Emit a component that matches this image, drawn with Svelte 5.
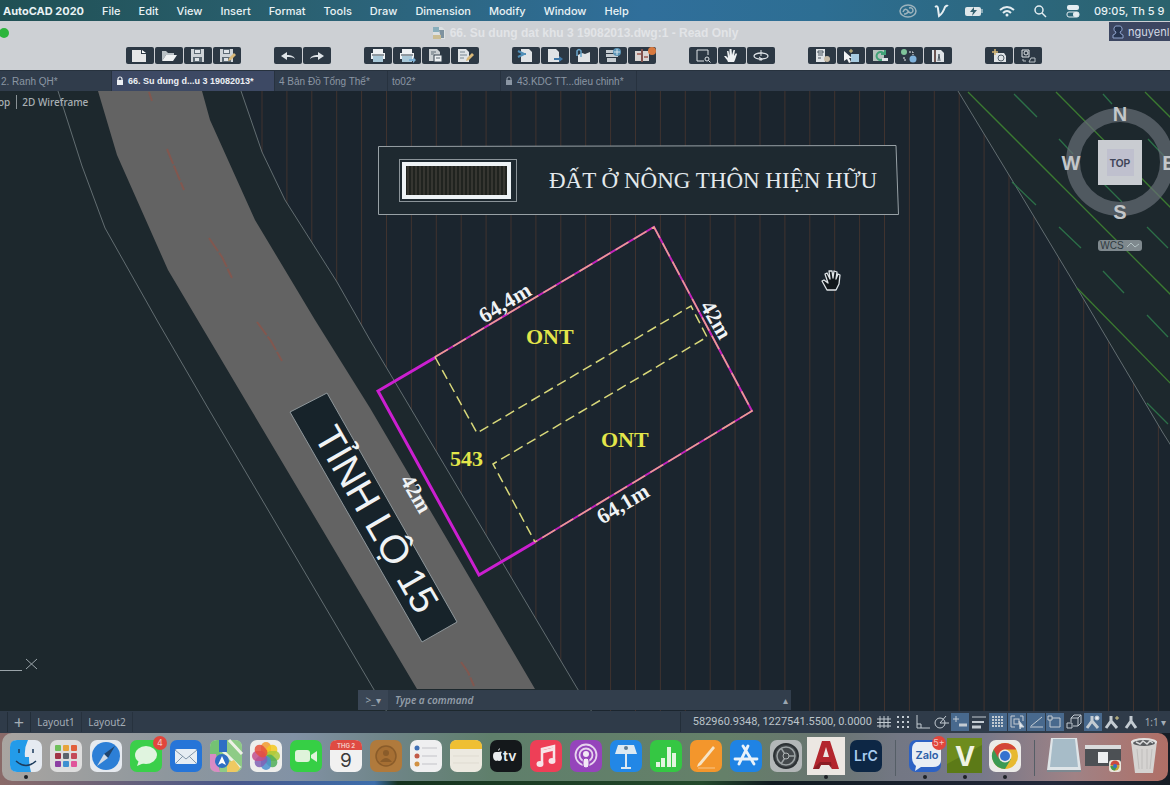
<script>
  const menus = ["File", "Edit", "View", "Insert", "Format", "Tools", "Draw", "Dimension", "Modify", "Window", "Help"];

  const printer = '<path d="M9 2h10v4H9zM7 6h14v6H7z" fill="#eef1f3"/><path d="M9 9h10v6H9z" fill="#a9c8d8"/><path d="M8 8h12" stroke="#33404c"/>';
  const floppy = '<path d="M7 2h13v13H7z" fill="#cfd4d8"/><path d="M10 2h7v5h-7zM9 10h9v5H9z" fill="#5d6a74"/><path d="M11 3h5v3h-5zM11 11h4v3h-4z" fill="#dfe4e8"/>';
  const pencil = '<path d="M15 14l1-3 5-5 2 2-5 5z" fill="#d9b878"/>';

  const toolGroups = [
    [
      { name: "New", icon: '<path d="M6 3h9v4h5v8H6z" fill="#e6e7e8"/><path d="M16 3l4 3h-4z" fill="#fff"/>' },
      { name: "Open", icon: '<path d="M7 14V4h4l2 2h6v2h-8z" fill="#b9c1c6"/><path d="M7 14l4-6h11l-4 6z" fill="#eef1f3"/>' },
      { name: "Save", icon: floppy },
      { name: "Save As", icon: floppy + pencil }
    ],
    [
      { name: "Undo", icon: '<path d="M7 9l6-4v3c4 0 7 1 8 4-2-2-5-2-8-2v3z" fill="#dfe4e8"/>' },
      { name: "Redo", icon: '<path d="M21 9l-6-4v3c-4 0-7 1-8 4 2-2 5-2 8-2v3z" fill="#dfe4e8"/>' }
    ],
    [
      { name: "Print", icon: printer },
      { name: "Batch Print", icon: printer + '<path d="M16 12h4v-2l3 3-3 3v-2h-4z" fill="#7fb2d6"/>' },
      { name: "Page Setup", icon: '<path d="M7 2h8l3 3v9H7z" fill="#cbd0d3"/><path d="M12 8h8v7h-8z" fill="#eef1f3" stroke="#33404c"/><path d="M9 5h5M9 7h3M14 11h4" stroke="#5d6a74"/>' },
      { name: "Edit Page", icon: '<path d="M7 2h8l3 3v10H7z" fill="#dfe3e6"/><path d="M9 5h5M9 8h7M9 11h4" stroke="#7b8892"/>' + pencil }
    ],
    [
      { name: "Import", icon: '<path d="M9 2h8l3 3v10H9z" fill="#dfe3e6"/><path d="M6 4l6 3M6 10l6-3M9 7h5" stroke="#4f8fb8" stroke-width="2" fill="none"/>' },
      { name: "Export", icon: '<path d="M7 2h8l3 3v10H7z" fill="#dfe3e6"/><path d="M13 11h5V9l4 3-4 3v-2h-5z" fill="#3f78a8"/>' },
      { name: "Attach", icon: '<path d="M8 8l4-2 3 1 5-2v10H8z" fill="#dfe3e6"/><path d="M7 9V4q2-3 4 0v6" stroke="#6aa6cb" fill="none" stroke-width="1.5"/>' },
      { name: "Reference", icon: '<path d="M7 3h9v3H7zM7 7h12v3H7zM8 11h9v4H8z" fill="#c5ccd1"/><circle cx="18" cy="5" r="4" fill="#5d96b8"/><path d="M15 5h6M18 2v6" stroke="#d5e3eb"/>' },
      { name: "Compare", alert: true, icon: '<path d="M7 4h6v10H7zM15 4h6v10h-6z" fill="#d9d5d3"/><path d="M14 2v13M9 7h4M16 10h4" stroke="#9d5b50" stroke-width="1.5"/>' }
    ],
    [
      { name: "Zoom Window", icon: '<path d="M19 8V3H8v11h7" fill="none" stroke="#dfe4e8"/><circle cx="18" cy="12" r="2" fill="none" stroke="#dfe4e8"/><path d="M19.500 13.500l2 2" stroke="#dfe4e8"/>' },
      { name: "Pan", icon: '<path d="M10 15c-1-3-3-4-4-6l2 0 2 2-1-7h1.500l1 5V2h2l.5 6 1.500-5h1.500l-1 6 2-3 1 1-2 6-1 2z" fill="#eef1f3"/>' },
      { name: "Orbit", icon: '<ellipse cx="14" cy="9" rx="7" ry="3" fill="none" stroke="#dfe4e8" stroke-width="1.300"/><path d="M14 3v6M14 11v3M12 13l3-1-3-2" stroke="#dfe4e8" fill="none"/>' }
    ],
    [
      { name: "Properties", icon: '<path d="M8 2h9v13H8z" fill="#dfe3e6"/><path d="M10 4h5v2h-5zM10 8h5M10 11h3" stroke="#4c5963" fill="none"/><circle cx="19" cy="12" r="3" fill="#c8bca7"/>' },
      { name: "Quick Select", icon: '<path d="M14 7h8v8h-8z" fill="#a7cbe0"/><path d="M7 4v10l3-2 2 4 2-1-2-4h3z" fill="#f2f4f5"/><path d="M12 4h4M14 2v4" stroke="#d9c884"/>' },
      { name: "Update", icon: '<path d="M7 3h11v11H7z" fill="#b5c2bd"/><path d="M18 7a4 4 0 1 0 0 4M19 3v4h-4" fill="none" stroke="#3fa277" stroke-width="2"/><path d="M16 11h6v3h-6z" fill="#dfe4e8"/>' },
      { name: "Match", icon: '<circle cx="9" cy="5" r="3" fill="#7fc39a"/><circle cx="18" cy="12" r="3.500" fill="#7fb2dc"/><path d="M14 5h4v3M9 10v3h3" stroke="#e8ebed" stroke-dasharray="2 1" fill="none"/>' },
      { name: "Library", icon: '<path d="M8 3h9l3 3v9H8z" fill="#dfe3e6"/><path d="M11 3v12" stroke="#6c5552" stroke-width="2"/><path d="M14 14l1-7 1 7" stroke="#4c5963" fill="none"/>' }
    ],
    [
      { name: "Insert Block", icon: '<path d="M9 6h10l2 3v6H9z" fill="#dfe3e6"/><circle cx="16" cy="11" r="3" fill="none" stroke="#53606a"/><path d="M7 5h6M10 2v6" stroke="#d5b774" stroke-width="1.500"/>' },
      { name: "Edit Block", icon: '<path d="M8 3h7v7H8z" fill="none" stroke="#dfe3e6"/><circle cx="12" cy="6" r="2" fill="none" stroke="#dfe3e6"/><path d="M9 12v2h3M15 15l2-4h4v4z" stroke="#b9c1c6" fill="none"/>' }
    ]
  ];

  const tabs = [
    { title: "2. Ranh QH*", size: "first" },
    { title: "66. Su dung d...u 3 19082013*", locked: true, active: true, size: "wide" },
    { title: "4 Bản Đồ Tổng Thể*" },
    { title: "to02*" },
    { title: "43.KDC TT...dieu chinh*", locked: true, size: "mid" }
  ];

  // hatch of the residential zone
  const hatch = Array.from({ length: 37 }, (_, i) => 262 + i * 24.9);
  const swatchHatch = Array.from({ length: 25 }, (_, i) => 408 + i * 4);

  const medians = ["M149 92L152 101", "M167 149L174 166L184 190", "M209 238L222 257L232 278", "M257 322L271 341L282 361", "M461 662L468 672L474 686"];
  const greenLines = ["M968 92L1175 299", "M1056 92L1175 212", "M1145 92L1175 122", "M1077 288L1175 388"];
  const greenDashes = ["M1014 94L1037 117", "M1103 94L1112 104", "M1059 139L1073 154", "M1148 139L1164 156", "M1104 184L1122 202", "M1012 182L1036 205", "M1059 227L1081 248", "M1147 227L1168 248", "M1103 271L1124 293", "M1147 315L1168 337", "M1147 403L1168 424"];

  const status = [
    { name: "Grid", icon: '<path d="M5 3v12M9 3v12M13 3v12M2 6h14M2 9.500h14M2 13h14"/>' },
    { name: "Snap", icon: '<path d="M3 4h12M3 9h12M3 14h12" stroke-dasharray="2 3" stroke-width="2"/>' },
    { name: "Ortho", icon: '<path d="M4 2v13h13M4 11h4v4"/>' },
    { name: "Polar", icon: '<circle cx="8" cy="10" r="5"/><path d="M8 10l6-7M8 10h9"/>' },
    { name: "Dynamic input", on: true, icon: '<path d="M5 3v6M2 6h6"/><path d="M8 12h8" stroke-width="3"/>' },
    { name: "Lineweight", icon: '<path d="M2 4h14" /><path d="M2 9h12" stroke-width="2"/><path d="M2 14h9" stroke-width="3"/>' },
    { name: "Transparency", on: true, icon: '<path d="M3 4h12M3 7h12M3 10h12M3 13h12" stroke-dasharray="2 1" stroke-width="2"/>' },
    { name: "Selection cycling", on: true, icon: '<path d="M7 3H3v11h4M12 3h3v5"/><rect x="6" y="6" width="5" height="5"/><path d="M11 8l5 6-3 0-1 2z" fill="#e5ebf1"/>' },
    { name: "Tracking", on: true, icon: '<path d="M3 14h13M4 13l11-9"/>' },
    { name: "Object snap", on: true, icon: '<path d="M4 5h10v9H4z"/><path d="M2 3h4v4H2z" fill="#48637f"/>' },
    { name: "3D snap", icon: '<path d="M6 5l3-3h7v8l-3 3M6 5h7v8H8M13 5l3-3M6 5v4"/><path d="M2 10h5v5H2z"/>' },
    { name: "Annotation visibility", on: true, icon: '<path d="M8 3v6M8 8L3 15M8 8l6 7" stroke-width="3"/><circle cx="13" cy="5" r="2" fill="#e5ebf1"/>' },
    { name: "Auto scale", icon: '<path d="M8 3v6M8 8L3 15M8 8l6 7" stroke-width="3"/><path d="M12 5h4M14 3v4" stroke="#d8cc8c"/>' },
    { name: "Annotation scale", icon: '<path d="M9 3v6M9 8l-5 7M9 8l5 7" stroke-width="3"/>' }
  ];

  const tile = (fill) => `<rect width="32" height="32" rx="7" fill="${fill}"/>`;
  const petals = ["#f29a2e", "#f3c81f", "#a8c93b", "#4fae5a", "#4a8fcf", "#8062b5", "#c24f8d", "#e5503d"]
    .map((c, i) => `<rect x="11" y="2" width="10" height="14" rx="5" fill="${c}" opacity=".85" transform="rotate(${i * 45} 16 16)"/>`)
    .join("");
  const pads = ["#6fbf5b", "#e7a33a", "#e2603b", "#a03344", "#5c646d", "#c44a58", "#8c3fa3", "#3f8fd0", "#e0559b"]
    .map((c, i) => `<rect x="${5 + (i % 3) * 8}" y="${5 + Math.floor(i / 3) * 8}" width="6" height="6" rx="1" fill="${c}"/>`)
    .join("");

  const dock = [
    { name: "Finder", running: true, icon: tile("#e5eaf1") + '<path d="M7 0h11q-4 8-3 17h4q0 8 2 15H7q-7 0-7-7V7q0-7 7-7z" fill="#239be9"/><path d="M9 9v4M23 9v4M6 21q10 9 20 0" stroke="#1c3b5c" stroke-width="1.500" fill="none"/>' },
    { name: "Launchpad", icon: tile("#dedede") + pads },
    { name: "Safari", icon: tile("#e6eaef") + '<circle cx="16" cy="16" r="14" fill="#2d7fd6"/><path d="M25 6L18 18 14 14z" fill="#22466f"/><path d="M7 26l7-12 4 4z" fill="#d3dbe5"/>' },
    { name: "Messages", badge: "4", icon: tile("#3bcf4a") + '<ellipse cx="16" cy="15" rx="11" ry="9" fill="#e0f4df"/><path d="M9 20l-2 6 7-3z" fill="#e0f4df"/>' },
    { name: "Mail", icon: tile("#2675d8") + '<rect x="5" y="9" width="22" height="15" rx="2" fill="#e6edf3"/><path d="M5 10l11 9 11-9M6 23l7-7M26 23l-7-7" fill="none" stroke="#8397aa"/>' },
    { name: "Maps", icon: tile("#dfe6dc") + '<path d="M0 8V7q0-7 7-7h3v32H7q-7 0-7-7z" fill="#74c273"/><path d="M10 0h15q7 0 7 7v18q0 7-7 7H10z" fill="#8ecb86"/><path d="M19 0l13 14M10 8l20 20" stroke="#eef1e6" stroke-width="3"/><path d="M9 0h8v12H9z" fill="#2e6fc4"/><path d="M0 14v11q0 7 7 7h3l-4-18z" fill="#d98bc4"/><path d="M17 23l7-3 6 8q-2 4-5 4h-8z" fill="#efc961"/><circle cx="12" cy="21" r="7" fill="#2d6fc4"/><path d="M12 16l4 9-4-2-4 2z" fill="#fff"/>' },
    { name: "Photos", icon: tile("#eeeeec") + petals },
    { name: "FaceTime", icon: tile("#36cf45") + '<rect x="5" y="10" width="15" height="12" rx="3" fill="#dff3da"/><path d="M21 15l6-4v11l-6-4z" fill="#dff3da"/>' },
    { name: "Calendar", icon: tile("#f1f1f1") + '<path d="M0 10V7q0-7 7-7h18q7 0 7 7v3z" fill="#df4a42"/><text x="16" y="8" font-size="6" font-weight="700" fill="#f3c6c0" text-anchor="middle">THG 2</text><text x="16" y="27" font-size="19" fill="#3a3a3a" text-anchor="middle">9</text>' },
    { name: "Contacts", icon: tile("#b07a3c") + '<circle cx="16" cy="16" r="10" fill="#a66f33" stroke="#8a5c2a" stroke-width="1.500"/><circle cx="16" cy="13" r="3" fill="#8a5c2a"/><path d="M10 22q6-8 12 0z" fill="#8a5c2a"/>' },
    { name: "Reminders", icon: tile("#efeff0") + '<circle cx="7" cy="8" r="2.500" fill="#3f6fb4"/><circle cx="7" cy="16" r="2.500" fill="#c25a48"/><circle cx="7" cy="24" r="2.500" fill="#d19143"/><path d="M12 8h15M12 16h15M12 24h15" stroke="#c3c3c8"/>' },
    { name: "Notes", icon: tile("#ece9e0") + '<path d="M0 9V7q0-7 7-7h18q7 0 7 7v2z" fill="#efbf33"/><path d="M3 16h26M3 23h26" stroke="#dfdbd1"/>' },
    { name: "TV", icon: tile("#14181b") + '<path d="M9 12q2-1 3 0-2 2 0 5 0 4-3 4-2-1-3 0-3-1-3-5 0-4 3-4 1 0 3 0zM8 11q0-2 2-3 0 2-2 3z" fill="#e9ecee"/><text x="13" y="21" font-size="14" font-weight="600" fill="#e9ecee">tv</text>' },
    { name: "Music", icon: tile("#ee3f57") + '<path d="M12 23V9l12-3v14" fill="none" stroke="#f7e5e8" stroke-width="2.500"/><path d="M12 12l12-3" stroke="#f7e5e8" stroke-width="3"/><ellipse cx="10" cy="24" rx="3.500" ry="3" fill="#f7e5e8"/><ellipse cx="22" cy="21" rx="3.500" ry="3" fill="#f7e5e8"/>' },
    { name: "Podcasts", icon: tile("#9544bb") + '<circle cx="16" cy="15" r="10.500" fill="none" stroke="#e7d4ee" stroke-width="1.800"/><circle cx="16" cy="15" r="6.500" fill="none" stroke="#e7d4ee" stroke-width="1.800"/><circle cx="16" cy="14" r="3" fill="#f3e9f6"/><rect x="13" y="18" width="6" height="10" rx="3" fill="#f3e9f6" stroke="#9544bb"/>' },
    { name: "Keynote", icon: tile("#2287e6") + '<path d="M8 5h16l3 9H5z" fill="#dce9f2"/><circle cx="16" cy="8" r="2" fill="#5e7c93"/><path d="M16 14v13M11 28h10" stroke="#dce9f2" stroke-width="2"/>' },
    { name: "Numbers", icon: tile("#35c743") + '<path d="M6 27v-5h4v5zM11 27v-9h4v9zM17 27V7h4v20zM22 27V13h4v14z" fill="#e3f5df"/>' },
    { name: "Pages", icon: tile("#f3962c") + '<path d="M8 24L23 6l2 2L11 25l-4 2z" fill="#f6e4c6"/><path d="M8 28h17" stroke="#f7c68a"/>' },
    { name: "App Store", icon: tile("#1f83e4") + '<path d="M18 6L9 24M13 6l11 18M5 19h22" stroke="#e9f2fa" stroke-width="2.800" stroke-linecap="round"/>' },
    { name: "System Settings", icon: tile("#b3b7b8") + '<circle cx="16" cy="16" r="12" fill="#43484b" stroke="#2d3235" stroke-width="2"/><circle cx="16" cy="16" r="9" fill="none" stroke="#9ca2a4" stroke-width="1.500"/><circle cx="16" cy="16" r="3" fill="none" stroke="#b3b7b8"/><path d="M19 16h6M14.500 13.500L11 8M14.500 18.500L11 24" stroke="#9ca2a4" stroke-width="1.500"/>' },
    { name: "AutoCAD", running: true, icon: '<rect x="-3" y="-3" width="38" height="38" fill="#ece7e2"/><path d="M3 29L12 1h8l9 28h-7l-2-7h-8l-3 7z" fill="#b3262d"/><path d="M13 17h6l-3-10z" fill="#ece7e2"/><path d="M3 29l7-7h11l1 7-3-4-8 0-2 4z" fill="#8c1d24"/>' },
    { name: "Lightroom Classic", icon: tile("#0d2745") + '<text x="16" y="21" font-size="14" font-weight="600" fill="#a9cdf0" text-anchor="middle">LrC</text>' },
    { split: true },
    { name: "Zalo", badge: "5+", running: true, icon: tile("#2d62c4") + '<path d="M7 2h20q5 0 5 6v12q0 7-8 7H12l-6 4 1-5q-4-3-4-8V9q0-5 4-7z" fill="#e9eef4"/><text x="18" y="19" font-size="11" font-weight="600" fill="#2d5fa8" text-anchor="middle">Zalo</text>' },
    { name: "V", running: true, icon: '<rect x="-2" y="-2" width="35" height="35" fill="#6e8c1d"/><path d="M-2 24L33 5v28H-2z" fill="#5c7a17"/><text x="16" y="26" font-size="27" font-weight="700" fill="#f0f3e2" text-anchor="middle">V</text>' },
    { name: "Chrome", running: true, icon: tile("#ecebe8") + '<circle cx="16" cy="16" r="13" fill="#e7b92f"/><path d="M16 16L4.700 9.500A13 13 0 0 0 16 29l6-10z" fill="#3b9a53"/><path d="M4.700 9.500A13 13 0 0 1 27.300 9.500H16a7 7 0 0 0-6 10z" fill="#d34538"/><circle cx="16" cy="16" r="6.500" fill="#ecebe8"/><circle cx="16" cy="16" r="5" fill="#3473cf"/>' },
    { split: true },
    { name: "Disk", icon: '<path d="M3-2h26l4 32H-1z" fill="#dfe5e8"/><path d="M5-1h22l3 28H2z" fill="#a7bcc8"/><path d="M-1 30h34v2H-1z" fill="#7d8991"/>' },
    { name: "Minimized window", icon: '<path d="M-3 5h36v21H-3z" fill="#4c5054"/><path d="M-3 5h36v4H-3z" fill="#dadbdc"/><path d="M10 12h10v11H10z" fill="#eef0f1"/><rect x="21" y="20" width="12" height="12" rx="3" fill="#e9e6dc"/><circle cx="27" cy="26" r="4.500" fill="#c9a43a"/><path d="M22.500 26a4.500 4.500 0 0 0 4.500 4.500l2-4z" fill="#3b9a53"/><path d="M22.500 25a4.500 4.500 0 0 1 9 0z" fill="#cc4a3d"/><circle cx="27" cy="26" r="2" fill="#3b70c4"/>' },
    { name: "Trash", icon: '<path d="M3 1h26l-4 32H7z" fill="#d5d3d1"/><ellipse cx="16" cy="2" rx="13" ry="4" fill="#e3e2e1"/><ellipse cx="16" cy="3" rx="11" ry="3" fill="#585b5e"/><path d="M8 2l4 2 3-3 4 3 3-3 3 2" stroke="#d9dadb" fill="none" stroke-width="1.500"/><path d="M9 9l2 20M14 9v20M19 9v20M24 9l-2 20" stroke="#bfbdbb"/>' }
  ];
</script>

{#snippet lock()}
  <svg class="lock" viewBox="0 0 8 10" aria-hidden="true">
    <path d="M2 5V3a2 2 0 0 1 4 0v2" fill="none" stroke="currentColor" stroke-width="1.2" />
    <rect x="1" y="4" width="6" height="5" fill="currentColor" />
  </svg>
{/snippet}

<div class="screen">
  <header class="menubar">
    <nav>
      <strong>AutoCAD 2020</strong>
      {#each menus as menu}
        <button>{menu}</button>
      {/each}
    </nav>
    <div class="tray">
      <svg viewBox="0 0 18 14"><ellipse cx="9" cy="7" rx="8" ry="6" fill="none" stroke="#9db3bd" stroke-width="1.5" /><path d="M4 8q2-5 5-1t5 0q0-4-4-3M5 10q3 0 5-3" fill="none" stroke="#9db3bd" stroke-width="1.5" /></svg>
      <svg viewBox="0 0 18 14"><path d="M3 3q3-2 3 2l1 7q4-3 6-9 2-2 3-1" fill="none" stroke="#e4edf1" stroke-width="2" /></svg>
      <svg viewBox="0 0 18 14"><rect x="0" y="3" width="16" height="9" rx="2" fill="#dfe7ea" /><path d="M17 5v4" stroke="#dfe7ea" /><path d="M9 3L5 8h3l-1 4 5-6H9z" fill="#33606f" /></svg>
      <svg viewBox="0 0 18 14"><path d="M2 6q7-6 14 0M5 9q4-4 8 0" fill="none" stroke="#e4edf1" stroke-width="2" /><circle cx="9" cy="11" r="1.500" fill="#e4edf1" /></svg>
      <svg viewBox="0 0 18 14"><circle cx="8" cy="6" r="4" fill="none" stroke="#e4edf1" stroke-width="1.500" /><path d="M11 9l4 4" stroke="#e4edf1" stroke-width="1.500" /></svg>
      <svg viewBox="0 0 18 14"><rect x="3" y="1" width="12" height="5" rx="2" fill="#e4edf1" /><rect x="3" y="8" width="12" height="5" rx="2" fill="none" stroke="#e4edf1" /><rect x="9" y="8" width="6" height="5" rx="2" fill="#e4edf1" /></svg>
      <time>09:05, Th 5 9</time>
    </div>
  </header>

  <div class="titlebar">
    <i class="light"></i>
    <div class="title">
      <svg viewBox="0 0 14 14" aria-hidden="true"><path d="M1 1h9l3 3v9H1z" fill="#dce0e2" /><path d="M1 1h6v5H1z" fill="#88aebc" /><path d="M7 4h5v8H9z" fill="#7e929f" /><path d="M1 9h8v4H1z" fill="#cbbd94" /></svg>
      <span>66. Su dung dat khu 3 19082013.dwg:1 - Read Only</span>
    </div>
    <button class="user">
      <svg viewBox="0 0 12 14" aria-hidden="true"><path d="M6 1a3 3 0 0 1 2 6q0 2 3 3v3H1v-3q3-1 3-3a3 3 0 0 1 2-6z" fill="#26344f" stroke="#8fa3cc" /></svg>
      nguyenl
    </button>
  </div>

  <div class="toolbar">
    {#each toolGroups as group}
      <div class="tools">
        {#each group as tool}
          <button aria-label={tool.name}>
            <svg viewBox="0 0 28 17">{@html tool.icon}</svg>
            {#if tool.alert}<i class="alert"></i>{/if}
          </button>
        {/each}
      </div>
    {/each}
  </div>

  <div class="tabs">
    {#each tabs as tab}
      <button class="tab {tab.size || ''}" class:active={tab.active}>
        {#if tab.locked}{@render lock()}{/if}
        <span>{tab.title}</span>
      </button>
    {/each}
  </div>

  <main class="canvas">
    <svg class="drawing" viewBox="0 91 1170 620" preserveAspectRatio="xMidYMid slice">
      <defs>
        <clipPath id="zone"><path d="M241 91L262 152L285 200L337 282L370 340L577 688L592 712H1175V452L1163 433L1077 288L1012 180L958 91z" /></clipPath>
      </defs>
      <g clip-path="url(#zone)">
        <rect x="230" y="91" width="945" height="621" fill="#1b252e" />
        {#each hatch as x}
          <path class="hatch" d="M{x} 91V712" />
        {/each}
      </g>

      <path class="road" d="M98 91L117 155L168 270L250 408L417 689H535L370 408L315 320L255 220L210 120L202 91z" />
      {#each medians as d}
        <path class="median" {d} />
      {/each}
      <path class="border" d="M58 91L82 166L105 228L158 322L208 408L373 688L387 712" />
      <path class="border" d="M241 91L262 152L285 200L337 282L370 340L577 688L592 712" />
      <path class="border" d="M958 91L1012 180L1077 288L1163 433L1175 452" />

      {#each greenLines as d}
        <path class="green" {d} />
      {/each}
      {#each greenDashes as d}
        <path class="green dash" {d} />
      {/each}

      <!-- legend -->
      <path d="M378.500 146.500L896 145.500L898.500 214.500H378.500z" fill="#1e2930" stroke="#98a1a6" />
      <rect x="399.5" y="159.5" width="117" height="42" fill="none" stroke="#8b9499" />
      <rect x="404" y="164" width="105" height="33" fill="#20231f" stroke="#eef3f6" stroke-width="4" />
      {#each swatchHatch as x}
        <path class="fine" d="M{x} 166V195" />
      {/each}
      <text class="legend" x="549" y="188">ĐẤT Ở NÔNG THÔN HIỆN HỮU</text>

      <!-- parcel -->
      <path class="parcel" d="M435 357L654 227L752 411L535 542" />
      <path class="parcel front" d="M436 357L378 391L479 575L535 542" />
      <path class="overlay" d="M435 357L654 227L752 411L535 542" />
      <path class="plot" d="M435 357L477 433L691 306L707 337L493 464L535 542" />

      <text class="use" x="526" y="344">ONT</text>
      <text class="use" x="601" y="447">ONT</text>
      <text class="use" x="450" y="466">543</text>
      <text class="size" transform="translate(505 303) rotate(-31)" y="7">64,4m</text>
      <text class="size" transform="translate(716 320) rotate(60)" y="7">42m</text>
      <text class="size" transform="translate(416 494) rotate(60)" y="7">42m</text>
      <text class="size" transform="translate(623 504) rotate(-31)" y="7">64,1m</text>

      <path d="M290 412L327 393L457 622L422 642z" fill="#17232a" stroke="#8f979b" />
      <text class="roadname" transform="translate(379 518) rotate(60)" y="16">TỈNH LỘ 15</text>

      <!-- hand cursor -->
      <path d="M827 290L822 281L824 280L828 283L825 274L827 273L830 279L829 271H832L833 278L834 271L837 272L836 279L838 274L840 275L839 284L836 290z" fill="#11171b" stroke="#dfe4e7" stroke-width="1.3" stroke-linejoin="round" />

      <!-- view cube -->
      <circle cx="1120" cy="162" r="47" fill="none" stroke="#676e76" stroke-opacity=".7" stroke-width="14" />
      <rect x="1098" y="140" width="44" height="45" fill="#c9ccd1" />
      <rect x="1107" y="149" width="27" height="27" fill="#bfc0ce" />
      <text class="face" x="1120" y="167">TOP</text>
      <text class="compass" x="1120" y="121">N</text>
      <text class="compass" x="1071" y="170">W</text>
      <text class="compass" x="1120" y="219">S</text>
      <text class="compass" x="1169" y="170">E</text>
      <rect x="1098" y="240" width="44" height="11" rx="3" fill="#7f898e" />
      <text class="wcs" x="1112" y="249">WCS</text>
      <path d="M1127 247L1131 243L1135 247L1139 244" fill="none" stroke="#b3c2c4" />

      <path d="M0 670.500H22M26 659L37 669M37 659L26 669" stroke="#9aa4a9" fill="none" />
    </svg>

    <div class="viewlabel"><span>op</span><button>2D Wireframe</button></div>

    <form class="command">
      <button type="button" aria-label="Recent commands">&gt;_▾</button>
      <input aria-label="Command" placeholder="Type a command" />
      <i>▴</i>
    </form>
  </main>

  <footer class="statusbar">
    <button class="plus" aria-label="New layout">+</button>
    <button class="layout">Layout1</button>
    <button class="layout">Layout2</button>
    <output>582960.9348, 1227541.5500, 0.0000</output>
    <div class="toggles">
      {#each status as item}
        <button class:on={item.on} aria-label={item.name}>
          <svg viewBox="0 0 18 18" fill="none" stroke="#c3cbd2">{@html item.icon}</svg>
        </button>
      {/each}
      <button class="scale">1:1 ▾</button>
    </div>
  </footer>

  <div class="desktop">
    <div class="dock">
      {#each dock as app}
        {#if app.split}
          <i class="split"></i>
        {:else}
          <button aria-label={app.name} class:running={app.running}>
            <svg viewBox="0 0 32 32">{@html app.icon}</svg>
            {#if app.badge}<span class="badge">{app.badge}</span>{/if}
          </button>
        {/if}
      {/each}
    </div>
  </div>
</div>

<style>
  :global(body) {
    background: #1d272c;
  }
  .screen {
    display: flex;
    flex-direction: column;
    height: 100vh;
    overflow: hidden;
    font-family: Inter, "Liberation Sans", sans-serif;
    font-size: 11px;
  }
  button {
    padding: 0;
    border: 0;
    background: none;
    color: inherit;
    font: inherit;
    white-space: nowrap;
  }
  svg {
    display: block;
    overflow: visible;
  }
  .menubar {
    display: flex;
    flex: none;
    justify-content: space-between;
    height: 21px;
    overflow: hidden;
    color: #e9f2f5;
    background: linear-gradient(to right, #205054, #2a6070 25%, #306f9b 55%, #2d6e93 70%, #2b626d);
    font-weight: 500;
  }
  nav {
    display: flex;
    align-items: center;
    gap: 18px;
    padding-left: 3px;
  }
  .tray {
    display: flex;
    align-items: center;
    gap: 15px;
  }
  .tray svg {
    width: 18px;
    height: 14px;
  }
  time {
    width: 76px;
    margin-left: -3px;
    white-space: nowrap;
  }
  .titlebar {
    position: relative;
    display: flex;
    flex: none;
    align-items: center;
    justify-content: center;
    height: 24px;
    background: #cdd0d4;
  }
  .light {
    position: absolute;
    left: -1px;
    width: 10px;
    height: 10px;
    border-radius: 50%;
    background: #2cb53c;
  }
  .title {
    display: flex;
    align-items: center;
    gap: 4px;
    color: #e2e4e7;
    font-family: "Liberation Sans", sans-serif;
    font-size: 12px;
    font-weight: 700;
  }
  .title svg {
    width: 14px;
    height: 14px;
  }
  .user {
    position: absolute;
    top: 1px;
    right: 0;
    display: flex;
    align-items: center;
    gap: 4px;
    box-sizing: border-box;
    width: 61px;
    height: 19px;
    padding-left: 3px;
    background: #3c4661;
    color: #d5dbe6;
    font-size: 11px;
  }
  .user svg {
    flex: none;
    width: 12px;
    height: 14px;
  }
  .toolbar {
    display: flex;
    flex: none;
    gap: 33px;
    height: 17px;
    padding: 2px 0 6px 126px;
    background: #cdd0d4;
    border-bottom: 1px solid #27323e;
  }
  .tools {
    display: flex;
    gap: 1px;
  }
  .tools button {
    position: relative;
    width: 28px;
    height: 17px;
    border-radius: 2px;
    background: #2c3844;
  }
  .alert {
    position: absolute;
    top: 0;
    right: 0;
    width: 8px;
    height: 8px;
    border-radius: 50%;
    background: #d8793f;
  }
  .tabs {
    display: flex;
    flex: none;
    height: 20px;
    background: #303c4b;
    color: #8b96a3;
    font-family: "Liberation Sans", sans-serif;
    font-size: 10px;
  }
  .tab {
    display: flex;
    align-items: center;
    gap: 4px;
    box-sizing: border-box;
    width: 113px;
    padding-left: 4px;
    border-right: 1px solid #27323f;
  }
  .tab.first {
    width: 112px;
    padding-left: 1px;
  }
  .tab.wide {
    width: 163px;
  }
  .tab.mid {
    width: 136px;
  }
  .tab.active {
    background: #3d4964;
    color: #eceff3;
    font-weight: 700;
    font-size: 9px;
  }
  .lock {
    width: 8px;
    height: 10px;
  }
  .canvas {
    position: relative;
    flex: 1;
    min-height: 0;
    background: #1d282d;
  }
  .drawing {
    width: 100%;
    height: 100%;
    overflow: hidden;
  }
  .hatch {
    stroke: #40332f;
  }
  .fine {
    stroke: #4c4a45;
  }
  .road {
    fill: #636363;
  }
  .median {
    fill: none;
    stroke: #8f5347;
    stroke-width: 2;
    stroke-dasharray: 16 2;
    opacity: 0.7;
  }
  .border {
    fill: none;
    stroke: #626d71;
  }
  .green {
    stroke: #3b7a31;
    stroke-width: 1.3;
  }
  .green.dash {
    stroke: #2c7048;
  }
  .legend {
    fill: #e4e9ed;
    font-family: "Liberation Serif", serif;
    font-size: 23px;
  }
  .parcel {
    fill: none;
    stroke: #c423bb;
    stroke-width: 2;
  }
  .parcel.front {
    stroke: #cb1fd0;
    stroke-width: 3;
  }
  .overlay,
  .plot {
    fill: none;
    stroke: #d8d87a;
    stroke-width: 1.5;
    stroke-dasharray: 10 5;
  }
  .overlay {
    stroke: #eaa58c;
    stroke-dasharray: 15 6;
  }
  .use,
  .size {
    font-family: "Liberation Serif", serif;
    font-size: 22px;
    font-weight: 700;
  }
  .use {
    fill: #e3e64a;
  }
  .size {
    fill: #f0f3f5;
    text-anchor: middle;
  }
  .roadname {
    fill: #f0f3f5;
    font-family: "Liberation Sans", sans-serif;
    font-size: 39px;
    text-anchor: middle;
  }
  .compass,
  .face,
  .wcs {
    fill: #c3c7ca;
    font-family: "Liberation Sans", sans-serif;
    font-size: 20px;
    font-weight: 700;
    text-anchor: middle;
  }
  .face {
    fill: #3f4558;
    font-size: 10px;
  }
  .wcs {
    fill: #2f3a40;
    font-size: 10px;
    font-weight: 400;
  }
  .viewlabel {
    position: absolute;
    top: 4px;
    left: -2px;
    display: flex;
    color: #a9b0b4;
    font-family: "Noto Sans", sans-serif;
    font-size: 10px;
    font-weight: 500;
    line-height: 14px;
  }
  .viewlabel button {
    margin-left: 6px;
    padding-left: 5px;
    border-left: 1px solid #8a9296;
  }
  .command {
    position: absolute;
    bottom: 1px;
    left: 50%;
    display: flex;
    align-items: center;
    width: 37%;
    height: 20px;
    margin-left: -227px;
    background: #323e4c;
    color: #9ca7b1;
    font-family: "Noto Sans", sans-serif;
    font-size: 10px;
  }
  .command button {
    width: 30px;
    height: 20px;
    background: #3a4655;
  }
  .command input {
    flex: 1;
    min-width: 0;
    padding: 0 7px;
    border: 0;
    background: none;
    color: inherit;
    font: inherit;
    font-style: italic;
    font-weight: 600;
  }
  .command input::placeholder {
    color: #929da8;
  }
  .command i {
    padding-right: 3px;
    font-style: normal;
  }
  .statusbar {
    display: flex;
    flex: none;
    align-items: center;
    height: 22px;
    background: #2f3b49;
    color: #a4adb6;
    font-family: "Noto Sans", sans-serif;
    font-size: 10px;
  }
  .plus {
    width: 24px;
    height: 20px;
    margin-left: 7px;
    border: 1px solid #232e39;
    border-width: 0 1px;
    font-size: 18px;
    line-height: 20px;
  }
  .layout {
    width: 51px;
    height: 20px;
    border-right: 1px solid #27323e;
  }
  output {
    margin-left: auto;
    padding: 0 3px 0 12px;
    border-left: 1px solid #232e39;
    color: #bcc4ca;
    font-family: Roboto, sans-serif;
    font-size: 11px;
    line-height: 20px;
  }
  .toggles {
    display: flex;
    align-items: center;
    gap: 1px;
  }
  .toggles button {
    width: 18px;
    height: 18px;
  }
  .toggles .on {
    background: #48698d;
  }
  .toggles .scale {
    width: 29px;
  }
  .desktop {
    flex: none;
    height: 52px;
    background: linear-gradient(to right, #8a6a68, #49588b 20%, #3d6eab 32%, #16331f 34%, #244a2c 60%, #101a20 66%, #23283a 90%, #171d25);
  }
  .dock {
    display: flex;
    gap: 8px;
    height: 41px;
    margin: 0 2px;
    padding: 7px 8px 0;
    border-radius: 10px;
    background: linear-gradient(to right, #a9a5a1, #8e979d 14%, #8292a5 25%, #6f8588 33%, #5f7f6b 42%, #658069 62%, #68756f 70%, #737784 77%, #77798a 84%, #a08285 92%, #b06f66);
    font-family: Inter, sans-serif;
  }
  .dock button {
    position: relative;
    flex: none;
    width: 32px;
    height: 32px;
  }
  .running::after {
    content: "";
    position: absolute;
    bottom: -7px;
    left: 14px;
    width: 4px;
    height: 4px;
    border-radius: 50%;
    background: #1d2126;
  }
  .badge {
    position: absolute;
    top: -4px;
    right: -5px;
    width: 14px;
    height: 14px;
    border-radius: 50%;
    background: #e2453c;
    color: #f2c9c4;
    font-size: 9px;
    line-height: 14px;
  }
  .split {
    flex: none;
    width: 1px;
    height: 36px;
    margin: 0 5px;
    background: #555e66;
  }
</style>
